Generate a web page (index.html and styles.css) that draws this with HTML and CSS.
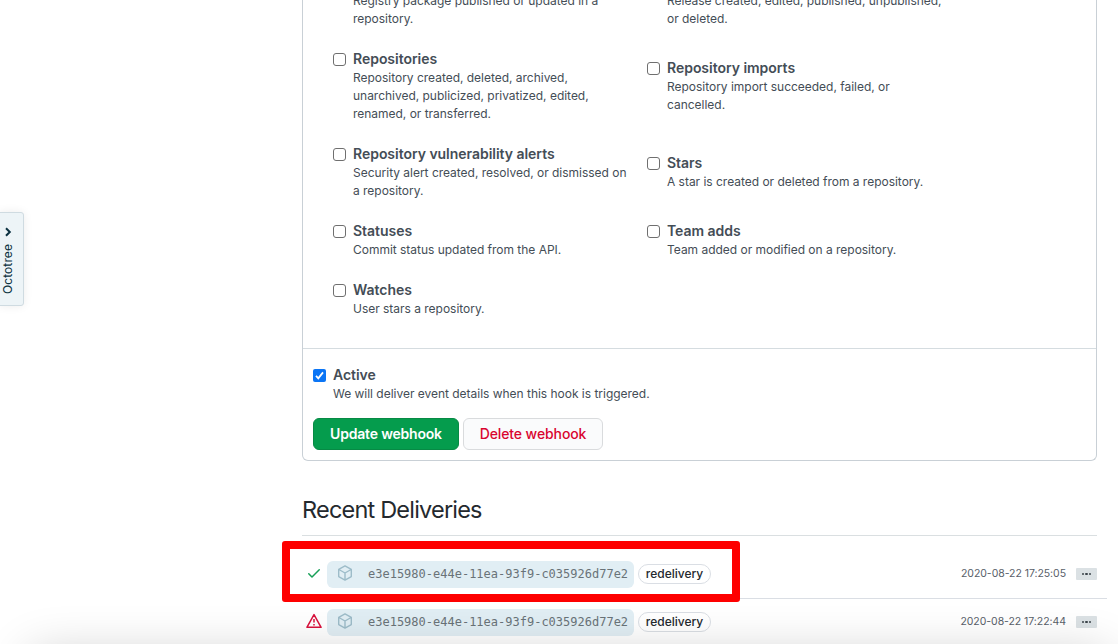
FILE: index.html
```html
<!DOCTYPE html>
<html lang="en">
<head>
<meta charset="utf-8">
<title>Webhook settings</title>
<link rel="stylesheet" href="styles.css">
</head>
<body>
<aside class="octotree">
  <svg class="octotree-icon" viewBox="0 0 10 10"><path d="M3 1.2 6.8 5 3 8.8"/></svg>
  <span class="octotree-label">Octotree</span>
</aside>
<main class="content">
  <section class="panel">
    <div class="events">
      <div class="event event-tail"><p class="desc">Registry package published or updated in a<br>repository.</p></div>
      <div class="event event-tail"><p class="desc">Release created, edited, published, unpublished,<br>or deleted.</p></div>
      <div class="event"><span class="box"></span><div><h3 class="title">Repositories</h3><p class="desc">Repository created, deleted, archived,<br>unarchived, publicized, privatized, edited,<br>renamed, or transferred.</p></div></div>
      <div class="event"><span class="box"></span><div><h3 class="title">Repository imports</h3><p class="desc">Repository import succeeded, failed, or<br>cancelled.</p></div></div>
      <div class="event"><span class="box"></span><div><h3 class="title">Repository vulnerability alerts</h3><p class="desc">Security alert created, resolved, or dismissed on<br>a repository.</p></div></div>
      <div class="event"><span class="box"></span><div><h3 class="title">Stars</h3><p class="desc">A star is created or deleted from a repository.</p></div></div>
      <div class="event"><span class="box"></span><div><h3 class="title">Statuses</h3><p class="desc">Commit status updated from the API.</p></div></div>
      <div class="event"><span class="box"></span><div><h3 class="title">Team adds</h3><p class="desc">Team added or modified on a repository.</p></div></div>
      <div class="event"><span class="box"></span><div><h3 class="title">Watches</h3><p class="desc">User stars a repository.</p></div></div>
    </div>
    <div class="panel-footer">
      <div class="event active">
        <svg class="box-checked" viewBox="0 0 13 13"><rect width="13" height="13" rx="2"/><path d="M3 6.8 5.3 9.3 10 3.4"/></svg>
        <div><h3 class="title">Active</h3><p class="desc">We will deliver event details when this hook is triggered.</p></div>
      </div>
      <div class="actions">
        <button class="btn btn-primary">Update webhook</button>
        <button class="btn btn-danger">Delete webhook</button>
      </div>
    </div>
  </section>
  <h2 class="heading">Recent Deliveries</h2>
  <ul class="deliveries">
    <li class="delivery delivery-highlighted">
      <svg class="status status-ok" viewBox="0 0 16 16"><path d="M13.78 4.22a.75.75 0 010 1.06l-7.25 7.25a.75.75 0 01-1.06 0L2.22 9.28a.75.75 0 011.06-1.06L6 10.94l6.72-6.72a.75.75 0 011.06 0z"/></svg>
      <span class="guid"><svg class="cube" viewBox="0 0 16 16"><path d="M8 .9 14.3 4.4v7.2L8 15.1 1.7 11.6V4.4zM1.9 4.5 8 8l6.1-3.5M8 8v7"/></svg><code class="hash">e3e15980-e44e-11ea-93f9-c035926d77e2</code></span>
      <span class="pill">redelivery</span>
      <time class="time">2020-08-22 17:25:05</time>
      <span class="more"><i></i><i></i><i></i></span>
    </li>
    <li class="delivery">
      <svg class="status status-error" viewBox="0 0 16 16"><path d="M8 1.6 15.1 14.3H.9zM8 6.1v3.4M8 10.9v1.5"/></svg>
      <span class="guid"><svg class="cube" viewBox="0 0 16 16"><path d="M8 .9 14.3 4.4v7.2L8 15.1 1.7 11.6V4.4zM1.9 4.5 8 8l6.1-3.5M8 8v7"/></svg><code class="hash">e3e15980-e44e-11ea-93f9-c035926d77e2</code></span>
      <span class="pill">redelivery</span>
      <time class="time">2020-08-22 17:22:44</time>
      <span class="more"><i></i><i></i><i></i></span>
    </li>
  </ul>
</main>
<div class="highlight"></div>
<div class="bottom-shadow"></div>
</body>
</html>
```
FILE: styles.css
```css
* { box-sizing: border-box; }
html { overflow: hidden; }
body {
  position: relative;
  height: 644px;
  margin: 0;
  overflow: hidden;
  background: #fff;
  color: #444d56;
  font-family: Inter, "Liberation Sans", sans-serif;
}
h2, h3, p, ul { margin: 0; padding: 0; }

.octotree {
  position: absolute;
  top: 212px;
  left: -1px;
  width: 25px;
  height: 94px;
  padding-top: 14px;
  display: flex;
  flex-direction: column;
  align-items: center;
  gap: 7px;
  padding-right: 7px;
  background: #edf4f7;
  border: 1px solid #cfdbe1;
  border-radius: 0 3px 3px 0;
  box-shadow: 0 0 10px rgba(0, 0, 0, .08);
  color: #0b3140;
}
.octotree-icon { width: 10px; height: 10px; fill: none; stroke: currentColor; stroke-width: 2; flex: none; }
.octotree-label {
  writing-mode: vertical-rl;
  transform: rotate(180deg);
  font-size: 12px;
  line-height: 16px;
  letter-spacing: .1px;
  white-space: nowrap;
}

.content { width: 795px; height: 644px; margin-left: 302px; }
.panel {
  height: 461px;
  border: 1px solid #c9d0d6;
  border-top: 0;
  border-radius: 0 0 6px 6px;
  overflow: hidden;
}
.events {
  display: grid;
  grid-template-columns: 314px 314px;
  align-items: center;
  height: 348px;
  margin-top: -8px;
  padding-left: 30px;
  align-content: start;
}
.event { display: flex; gap: 7px; padding-bottom: 20px; }
.event-tail { padding-left: 20px; }
.box { flex: none; width: 13px; height: 13px; margin-top: 5px; border: 1px solid #6f6f6f; border-radius: 3px; }
.box-checked { flex: none; width: 13px; height: 13px; margin-top: 5px; fill: #0b75f5; }
.box-checked path { fill: none; stroke: #fff; stroke-width: 1.8; }
.title { font-size: 14px; line-height: 21px; font-weight: 600; letter-spacing: -.03px; white-space: nowrap; }
.desc { font-size: 12px; line-height: 18px; letter-spacing: -.02px; white-space: nowrap; }
.panel-footer { height: 121px; margin-top: 8px; border-top: 1px solid #d5dce0; padding: 15px 10px 0; }
.active { padding-bottom: 15px; }
.actions { display: flex; gap: 4px; }
.btn {
  height: 32px;
  padding: 0;
  border-radius: 6px;
  font: 500 14px/20px Inter, sans-serif;
  letter-spacing: -.1px;
  white-space: nowrap;
}
.btn-primary { width: 146px; background: #059c4d; border: 1px solid #078a45; color: #fff; font-weight: 600; letter-spacing: -.2px; }
.btn-danger { width: 140px; background: #fafbfc; border: 1px solid #d9dbdd; color: #d9052f; }

.heading {
  height: 75px;
  padding-top: 31px;
  border-bottom: 1px solid #dadfe1;
  color: #24292e;
  font-size: 23.5px;
  line-height: 36px;
  font-weight: 400;
  letter-spacing: -.8px;
}
.deliveries { list-style: none; }
.delivery { display: flex; align-items: center; height: 45px; padding: 2px 0 0 4px; }
.delivery-highlighted { height: 63px; padding-top: 15px; width: 805px; padding-right: 10px; border-bottom: 1px solid #dadee4; }
.status { width: 16px; height: 16px; flex: none; margin-bottom: 3px; }
.status-ok { fill: #18a058; }
.status-error { fill: none; stroke: #d9123c; stroke-width: 1.5; stroke-linejoin: round; }
.guid {
  display: flex;
  align-items: center;
  width: 307px;
  height: 27px;
  margin-left: 5px;
  padding: 0 0 2px 10px;
  border-radius: 6px;
  background: #e1eef4;
}
.cube { width: 16px; height: 16px; margin-bottom: 1px; fill: none; stroke: #9dbcc9; stroke-width: 1.4; stroke-linejoin: round; }
.hash { margin-left: 15px; color: #697378; font: 12px/18px "DejaVu Sans Mono", monospace; }
.pill {
  width: 73px;
  height: 20px;
  margin: 0 0 1px 4px;
  border: 1px solid #dadee4;
  border-radius: 10px;
  color: #24292e;
  font-size: 12px;
  line-height: 18px;
  font-weight: 500;
  text-align: center;
}
.time { margin: 0 0 2px auto; color: #586069; font-size: 10.5px; line-height: 18px; letter-spacing: -.05px; white-space: nowrap; }
.more { display: flex; justify-content: center; align-items: center; gap: 1px; width: 21px; height: 12px; margin: 0 0 1px 10px; border-radius: 1px; background: #dbe1e4; }
.more i { width: 2.5px; height: 2.5px; border-radius: 50%; background: #3c444b; }

.highlight { position: absolute; left: 282px; top: 541px; width: 458px; height: 61px; border: 8px solid #fe0000; border-radius: 3px; }
.bottom-shadow { position: absolute; top: 654px; left: 30px; width: 1078px; height: 60px; box-shadow: 0 0 50px rgba(0, 0, 0, .2); }
```
